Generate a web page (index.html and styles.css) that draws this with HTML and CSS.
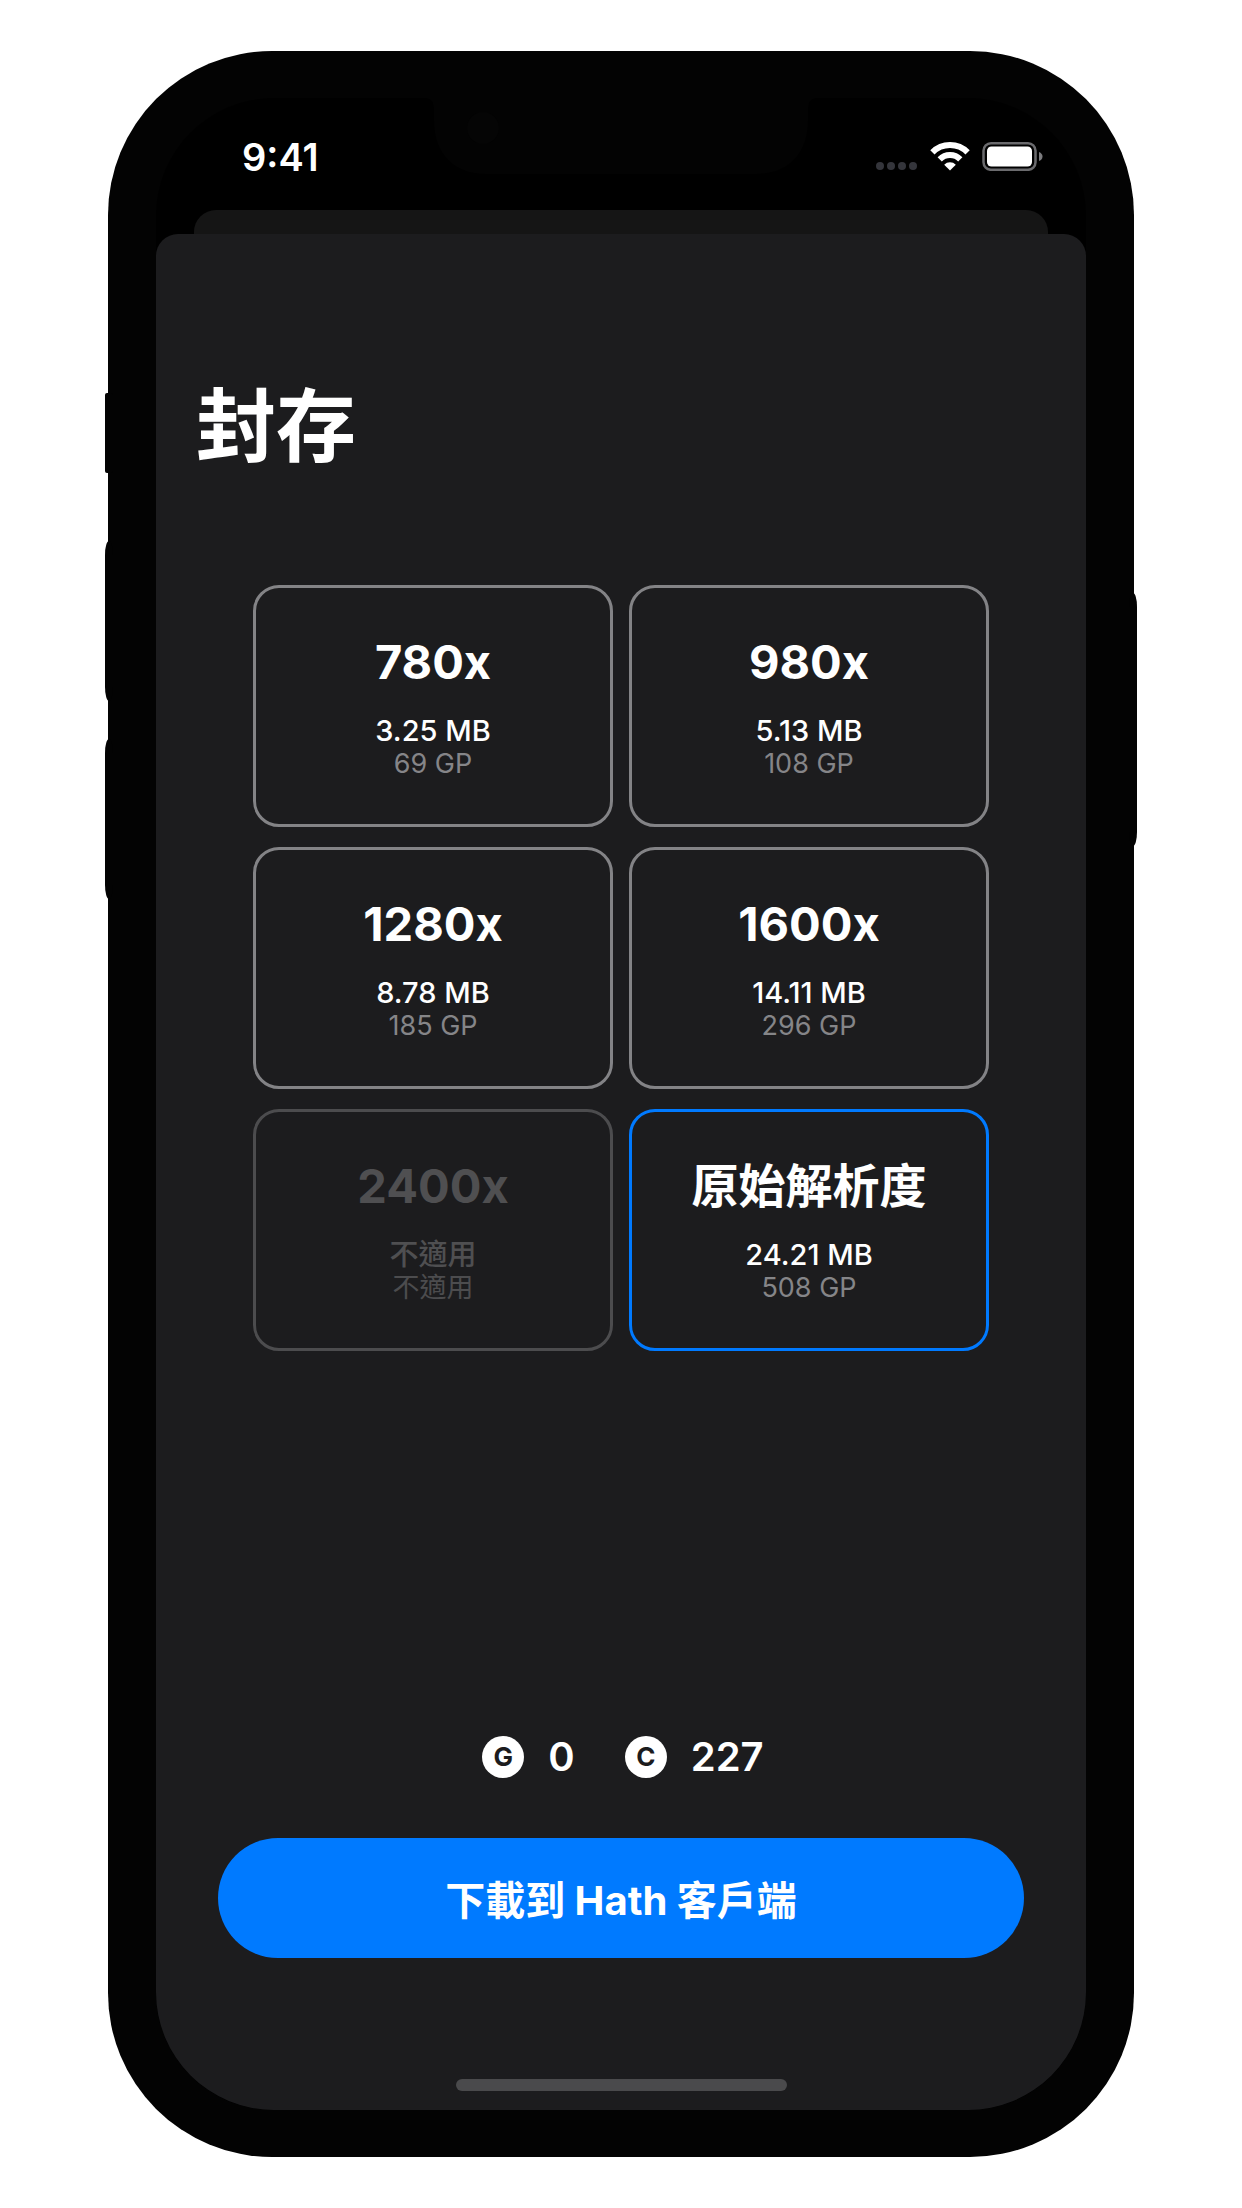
FILE: index.html
```html
<!DOCTYPE html>
<html lang="zh-Hant">
<head>
<meta charset="utf-8">
<meta name="viewport" content="width=device-width, initial-scale=1">
<title>封存</title>
<link rel="stylesheet" href="styles.css">
</head>
<body>
<div class="phone">
  <span class="side-key side-key-mute"></span>
  <span class="side-key side-key-up"></span>
  <span class="side-key side-key-down"></span>
  <span class="side-key side-key-power"></span>
  <div class="screen">
    <svg class="notch" width="390" height="76" viewBox="0 0 390 76" aria-hidden="true">
      <path d="M0 0Q8 1 8 12V22C8 56 28 76 60 76H330C362 76 382 56 382 22V12Q382 1 390 0Z" fill="#030303"/>
      <circle cx="57" cy="30" r="16" fill="#050505"/>
    </svg>
    <header class="status-bar">
      <time class="clock">9:41</time>
      <div class="status-icons">
        <svg width="42" height="30" viewBox="0 0 42 30" fill="#34353b" aria-label="無訊號">
          <circle cx="4" cy="25" r="4"/><circle cx="15" cy="25" r="4"/><circle cx="26" cy="25" r="4"/><circle cx="37" cy="25" r="4"/>
        </svg>
        <svg width="40" height="30" viewBox="0 0 40 30" aria-label="Wi-Fi">
          <g fill="none" stroke="#fff" stroke-width="6">
            <path d="M2.400 11.400A24.800 24.800 0 0 1 37.600 11.400"/>
            <path d="M9.700 18.300A14.600 14.600 0 0 1 30.300 18.300"/>
          </g>
          <path d="M20 29.500L14.200 23.700A8.200 8.200 0 0 1 25.800 23.700Z" fill="#fff"/>
        </svg>
        <svg width="61" height="30" viewBox="0 0 61 30" aria-label="電池已充滿">
          <rect x="1.500" y="2.200" width="52" height="26.600" rx="7.500" fill="none" stroke="#6b6b6e" stroke-width="2.500"/>
          <rect x="5" y="5.500" width="45" height="20" rx="4.500" fill="#fff"/>
          <path d="M57 11Q60.500 12.500 60.500 15.500T57 20Z" fill="#7b7b7e"/>
        </svg>
      </div>
    </header>
    <div class="back-sheet"></div>
    <main class="sheet">
      <h1 class="title">封存</h1>
      <div class="options">
        <button class="option" type="button"><span class="name">780x</span><span class="size">3.25 MB</span><span class="cost">69 GP</span></button>
        <button class="option" type="button"><span class="name">980x</span><span class="size">5.13 MB</span><span class="cost">108 GP</span></button>
        <button class="option" type="button"><span class="name">1280x</span><span class="size">8.78 MB</span><span class="cost">185 GP</span></button>
        <button class="option" type="button"><span class="name">1600x</span><span class="size">14.11 MB</span><span class="cost">296 GP</span></button>
        <button class="option" type="button" disabled><span class="name">2400x</span><span class="size">不適用</span><span class="cost">不適用</span></button>
        <button class="option selected" type="button" aria-pressed="true"><span class="name">原始解析度</span><span class="size">24.21 MB</span><span class="cost">508 GP</span></button>
      </div>
      <div class="balances">
        <div class="balance"><span class="coin">G</span><span>0</span></div>
        <div class="balance"><span class="coin">C</span><span>227</span></div>
      </div>
      <button class="download" type="button">下載到 Hath 客戶端</button>
      <div class="home-indicator"></div>
    </main>
  </div>
</div>
</body>
</html>
```
FILE: styles.css
```css
* {
  box-sizing: border-box;
}

body {
  margin: 0;
  min-height: 100vh;
  padding: 51px 108px;
  display: flex;
  background: #fff;
  color: #fff;
  font-family: Inter, "Noto Sans CJK TC", sans-serif;
}

button {
  margin: 0;
  padding: 0;
  color: inherit;
  font: inherit;
  cursor: pointer;
}

.phone {
  position: relative;
  flex: 1;
  display: flex;
  padding: 47px 48px;
  border-radius: 164px;
  background: #030303;
}

.side-key {
  position: absolute;
  width: 8px;
  background: #030303;
}

.side-key-mute {
  left: -3px;
  top: 342px;
  height: 80px;
  border-radius: 2px;
}

.side-key-up,
.side-key-down {
  left: -3px;
  height: 160px;
  border-radius: 4px / 14px;
}

.side-key-up {
  top: 490px;
}

.side-key-down {
  top: 688px;
}

.side-key-power {
  right: -3px;
  top: 542px;
  height: 253px;
  border-radius: 4px / 14px;
}

.screen {
  position: relative;
  flex: 1;
  display: flex;
  flex-direction: column;
  overflow: hidden;
  border-radius: 118px;
  background: #000;
}

.notch {
  position: absolute;
  top: 0;
  left: 50%;
  transform: translateX(-50%);
}

.status-bar {
  display: flex;
  justify-content: space-between;
  height: 112px;
  padding: 43px 43px 0 86px;
}

.clock {
  font-size: 38px;
  font-weight: 600;
  line-height: 32px;
}

.status-icons {
  display: flex;
  gap: 12px;
}

.back-sheet {
  height: 46px;
  margin: 0 38px -22px;
  border-radius: 22px 22px 0 0;
  background: #151515;
}

.sheet {
  position: relative;
  flex: 1;
  display: flex;
  flex-direction: column;
  padding: 144px 40px 19px;
  border-radius: 22px 22px 0 0;
  background: #1c1c1e;
}

.title {
  margin: 0;
  font-size: 80px;
  font-weight: 700;
  line-height: 96px;
}

.options {
  display: grid;
  grid-template-columns: 1fr 1fr;
  gap: 20px 16px;
  margin: 111px 57px 60px;
}

.option {
  display: flex;
  flex-direction: column;
  align-items: center;
  justify-content: center;
  min-height: 242px;
  padding-top: 2px;
  border: 3px solid #838386;
  border-radius: 26px;
  background: none;
}

.option.selected {
  border-color: #007aff;
}

.name {
  margin-bottom: 24px;
  font-size: 47px;
  font-weight: 700;
  line-height: 58px;
}

.size {
  font-size: 29px;
  font-weight: 500;
  line-height: 32px;
}

.cost {
  color: #858588;
  font-size: 27px;
  line-height: 34px;
}

.option:disabled {
  border-color: #4c4c4e;
  color: #4f4f51;
  cursor: default;
}

.option:disabled .cost {
  color: #4c4c4e;
}

.balances {
  display: flex;
  justify-content: center;
  gap: 50px;
  margin: auto 0 60px;
  padding-left: 4px;
  font-size: 40px;
  font-weight: 600;
  line-height: 42px;
}

.balance {
  display: flex;
  gap: 24px;
}

.coin {
  width: 42px;
  border-radius: 50%;
  background: #fff;
  color: #1c1c1e;
  font-size: 26px;
  font-weight: 700;
  text-align: center;
}

.download {
  min-height: 120px;
  margin: 0 22px 121px;
  border: 0;
  border-radius: 60px;
  background: #007aff;
  font-size: 40px;
  font-weight: 700;
}

.home-indicator {
  align-self: center;
  width: 331px;
  height: 12px;
  border-radius: 6px;
  background: #4a4a4c;
}
```
